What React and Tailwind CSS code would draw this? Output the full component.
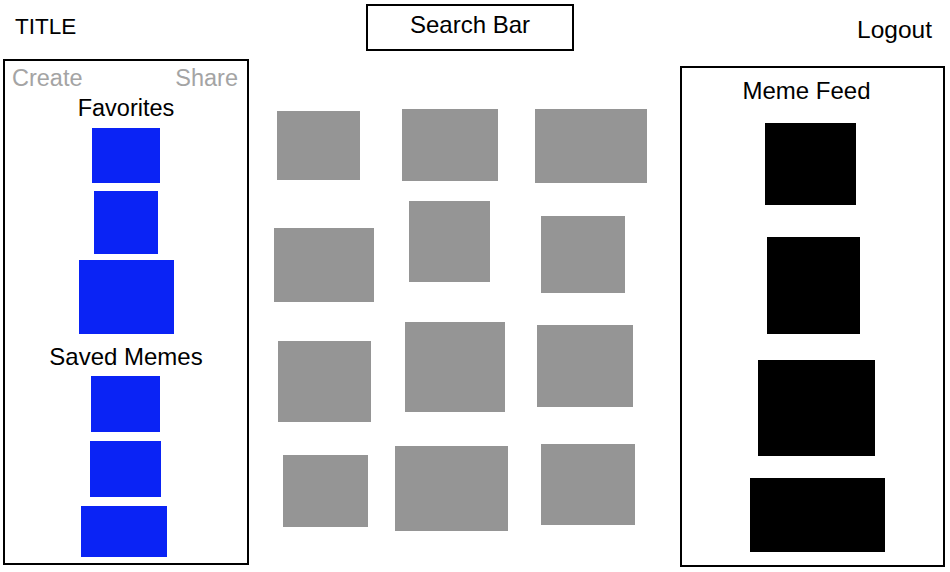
const font = { fontFamily: '"Liberation Sans", Arial, sans-serif' };

// gray meme tiles, each sits in its grid cell with its own nudge
const tiles = [
  'ml-[7px] mt-[11px] w-[83px] h-[69px]',
  'ml-[10px] mt-[9px] w-[96px] h-[72px]',
  'ml-[5px] mt-[9px] w-[112px] h-[74px]',
  'ml-[4px] mt-[32px] w-[100px] h-[74px]',
  'ml-[17px] mt-[5px] w-[81px] h-[81px]',
  'ml-[11px] mt-[20px] w-[84px] h-[77px]',
  'ml-[8px] mt-[25px] w-[93px] h-[81px]',
  'ml-[13px] mt-[6px] w-[100px] h-[90px]',
  'ml-[7px] mt-[9px] w-[96px] h-[82px]',
  'ml-[13px] mt-[17px] w-[85px] h-[72px]',
  'ml-[3px] mt-[8px] w-[113px] h-[85px]',
  'ml-[11px] mt-[6px] w-[94px] h-[81px]',
];

function Sidebar() {
  return (
    <div className="flex w-[246px] flex-col">
      <div className="mt-[13px] pl-[12px] text-[22.5px] leading-[28px] text-black">TITLE</div>

      <div className="mt-[18px] flex h-[506px] flex-col items-center border-2 border-black">
        <div className="mt-[3px] flex w-full justify-between pl-[7px] pr-[9px] text-[23.5px] leading-[28px] text-[#a4a4a4]">
          <span>Create</span>
          <span>Share</span>
        </div>
        <div className="mt-[2px] text-[23.5px] leading-[28px] text-black">Favorites</div>
        <div className="mt-[6px] h-[55px] w-[68px] bg-[#0a23f5]" />
        <div className="mt-[8px] h-[63px] w-[64px] bg-[#0a23f5]" />
        <div className="mt-[6px] h-[74px] w-[95px] bg-[#0a23f5]" />

        <div className="mt-[9px] text-[24px] leading-[28px] text-black">Saved Memes</div>
        <div className="mr-[2px] mt-[5px] h-[56px] w-[69px] bg-[#0a23f5]" />
        <div className="mr-[2px] mt-[9px] h-[56px] w-[71px] bg-[#0a23f5]" />
        <div className="mr-[4px] mt-[9px] h-[51px] w-[86px] bg-[#0a23f5]" />
      </div>
    </div>
  );
}

function Browse() {
  return (
    <div className="flex w-[431px] flex-col">
      <div className="ml-[117px] mt-[4px] flex h-[47px] w-[208px] justify-center border-2 border-black pt-[5px]">
        <span className="text-[24px] leading-[28px] text-black">Search Bar</span>
      </div>

      <div className="ml-[21px] mt-[49px] grid grid-cols-[122px_138px_120px] grid-rows-[96px_120px_122px_100px]">
        {tiles.map((cls, i) => (
          <div key={i} className="flex items-start justify-start">
            <div className={`bg-[#959595] ${cls}`} />
          </div>
        ))}
      </div>
    </div>
  );
}

function Feed() {
  return (
    <div className="flex w-[265px] flex-col">
      <div className="mt-[16px] pr-[13px] text-right text-[24.5px] leading-[28px] text-black">Logout</div>

      <div className="mt-[22px] flex h-[501px] flex-col items-center border-2 border-black">
        <div className="mr-[12px] mt-[9px] text-[24px] leading-[28px] text-black">Meme Feed</div>
        <div className="mr-[4px] mt-[18px] h-[82px] w-[91px] bg-black" />
        <div className="ml-[2px] mt-[32px] h-[97px] w-[93px] bg-black" />
        <div className="ml-[8px] mt-[26px] h-[96px] w-[117px] bg-black" />
        <div className="ml-[10px] mt-[22px] h-[74px] w-[135px] bg-black" />
      </div>
    </div>
  );
}

export default function App() {
  return (
    <div className="flex h-[572px] w-[950px] items-start bg-white pl-[3px]" style={font}>
      <Sidebar />
      <Browse />
      <Feed />
    </div>
  );
}
